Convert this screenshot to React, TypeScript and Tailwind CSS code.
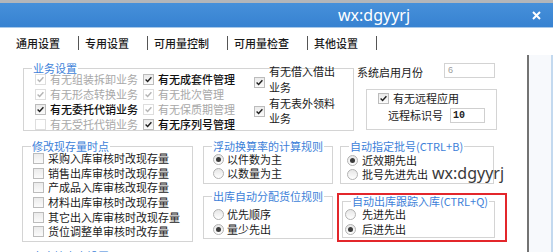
import React from "react";

const FONT = "font-['Microsoft_YaHei','Noto_Sans_CJK_SC',sans-serif]";

function Check({ checked = false, disabled = false }: { checked?: boolean; disabled?: boolean }) {
  return (
    <span
      className={
        disabled
          ? "shrink-0 w-[11px] h-[11px] border border-[#dedede] bg-white flex items-center justify-center"
          : "shrink-0 w-[11px] h-[11px] border border-[#bcbcbc] bg-linear-to-b from-[#ebebeb] to-[#fbfbfb] flex items-center justify-center"
      }
    >
      {checked && (
        <svg width="9" height="9" viewBox="0 0 9 9">
          <path
            d="M1.6 4.6 L3.6 6.5 L7.4 2.3"
            fill="none"
            stroke={disabled ? "#b4b4b4" : "#1e1e1e"}
            strokeWidth="1.4"
          />
        </svg>
      )}
    </span>
  );
}

function Radio({ checked = false }: { checked?: boolean }) {
  return (
    <span className="shrink-0 w-[11px] h-[11px] rounded-full border border-[#b2b2b2] bg-linear-to-b from-[#e6e6e6] to-white flex items-center justify-center">
      {checked && <span className="w-[5px] h-[5px] rounded-full bg-[#3c3c3c]" />}
    </span>
  );
}

function Group({
  legend,
  className,
  children,
}: {
  legend?: string;
  className: string;
  children?: React.ReactNode;
}) {
  return (
    <div className={"relative shrink-0 border border-[#d4d4d4] " + className}>
      {legend && (
        <span className="absolute -top-[7px] left-[8px] px-[1px] bg-white text-[#3d7fd9] leading-[12px] whitespace-nowrap">
          {legend}
        </span>
      )}
      {children}
    </div>
  );
}

function CRow({ label, checked, disabled, bold }: { label: string; checked?: boolean; disabled?: boolean; bold?: boolean }) {
  return (
    <div className="flex items-center h-[15px] gap-[4px]">
      <Check checked={checked} disabled={disabled} />
      <span className={disabled ? "text-[#a8a8a8] whitespace-nowrap leading-[13px]" : bold ? "text-[#111] font-medium whitespace-nowrap leading-[13px]" : "text-[#1a1a1a] whitespace-nowrap leading-[13px]"}>
        {label}
      </span>
    </div>
  );
}

function RRow({ label, checked, gap }: { label: string; checked?: boolean; gap: string }) {
  return (
    <div className={"flex items-center h-[14px] " + gap}>
      <Radio checked={checked} />
      <span className="text-[#1a1a1a] whitespace-nowrap leading-[13px]">{label}</span>
    </div>
  );
}

function Tab({ label }: { label: string }) {
  return (
    <>
      <span className="ml-[6px] mr-[18px] text-[#1a1a1a] font-medium whitespace-nowrap">{label}</span>
      <span className="w-px h-[14px] bg-[#555]" />
    </>
  );
}

export default function App() {
  return (
    <div className={"w-[553px] h-[252px] overflow-hidden bg-white flex flex-col relative text-[11px] " + FONT}>
      {/* top strip */}
      <div className="h-[3px] bg-[#b3b6ba] shrink-0" />
      {/* title bar */}
      <div className="h-[24px] shrink-0 bg-linear-to-b from-[#4690da] to-[#3782d1] flex items-center">
        <span className="ml-[338px] text-white text-[16px] leading-none font-['Noto_Sans',sans-serif]">wx:dgyyrj</span>
        <svg className="ml-auto mr-[12px]" width="9" height="9" viewBox="0 0 9 9">
          <path d="M1 1 L8 8 M8 1 L1 8" stroke="white" strokeWidth="2" />
        </svg>
      </div>
      <div className="h-px shrink-0 bg-[#a8c9ea]" />
      {/* tabs */}
      <div className="h-[27px] shrink-0 flex items-center pt-[3px] pl-[10px]">
        <Tab label="通用设置" />
        <Tab label="专用设置" />
        <Tab label="可用量控制" />
        <Tab label="可用量检查" />
        <Tab label="其他设置" />
      </div>
      <div className="flex flex-1 min-h-0">
        <div className="w-[527px] shrink-0 flex flex-col">
          {/* Row A */}
          <div className="flex items-start mt-[8px]">
            <Group legend="业务设置" className="ml-[23px] mt-[5px] w-[331px] h-[63px]">
              <div className="flex">
                <div className="w-[119px] pl-[11px] pt-[3px] flex flex-col">
                  <CRow label="有无组装拆卸业务" checked disabled />
                  <CRow label="有无形态转换业务" checked disabled />
                  <CRow label="有无委托代销业务" checked bold />
                  <CRow label="有无受托代销业务" disabled />
                </div>
                <div className="w-[111px] pt-[3px] flex flex-col">
                  <CRow label="有无成套件管理" checked bold />
                  <CRow label="有无批次管理" checked disabled />
                  <CRow label="有无保质期管理" checked disabled />
                  <CRow label="有无序列号管理" checked bold />
                </div>
                <div className="-mt-[6px] flex flex-col">
                  <div className="flex items-start gap-[4px]">
                    <span className="mt-[14px]">
                      <Check checked />
                    </span>
                    <span className="leading-[16px] text-[#1a1a1a]">
                      有无借入借出
                      <br />
                      业务
                    </span>
                  </div>
                  <div className="flex items-start gap-[4px] mt-[1px]">
                    <span className="mt-[10px]">
                      <Check checked />
                    </span>
                    <span className="leading-[15px] text-[#1a1a1a]">
                      有无表外领料
                      <br />
                      业务
                    </span>
                  </div>
                </div>
              </div>
            </Group>
            <div className="ml-[3px] flex flex-col">
              <div className="flex items-start">
                <span className="mt-[2px] leading-[14px] text-[#1a1a1a] whitespace-nowrap">系统启用月份</span>
                <div className="ml-[21px] w-[51px] h-[15px] border border-[#d3d3d3] bg-white text-[9px] leading-[13px] pl-[3px] text-[#9c9c9c] font-['Liberation_Sans',sans-serif]">
                  6
                </div>
              </div>
              <Group className="ml-[9px] mt-[10px] w-[131px] h-[41px]">
                <div className="pl-[11px] pt-[1px] flex items-center h-[15px] gap-[4px]">
                  <Check checked />
                  <span className="text-[#1a1a1a] whitespace-nowrap">有无远程应用</span>
                </div>
                <div className="pl-[21px] mt-[3px] flex items-center h-[15px]">
                  <span className="w-[62px] text-[#1a1a1a] whitespace-nowrap">远程标识号</span>
                  <div className="w-[35px] h-[15px] border border-[#cfcfcf] bg-white text-[10px] leading-[13px] pl-[2px] font-bold text-[#222] font-['Liberation_Mono',monospace]">
                    10
                  </div>
                </div>
              </Group>
            </div>
          </div>
          {/* Row B */}
          <div className="flex items-start mt-[15px]">
            <Group legend="修改现存量时点" className="ml-[22px] w-[171px] h-[96px]">
              <div className="pl-[10px] pt-[4px] flex flex-col">
                {[
                  "采购入库审核时改现存量",
                  "销售出库审核时改现存量",
                  "产成品入库审核改现存量",
                  "材料出库审核时改现存量",
                  "其它出入库审核时改现存量",
                  "货位调整单审核时改存量",
                ].map((t) => (
                  <div key={t} className="flex items-center h-[14.7px] gap-[4px]">
                    <Check />
                    <span className="text-[#1a1a1a] whitespace-nowrap leading-[13px]">{t}</span>
                  </div>
                ))}
              </div>
            </Group>
            <div className="ml-[10px] flex flex-col">
              <Group legend="浮动换算率的计算规则" className="w-[130px] h-[38px]">
                <div className="pl-[9px] pt-[5px] flex flex-col">
                  <RRow label="以件数为主" checked gap="gap-[3px]" />
                  <RRow label="以数量为主" gap="gap-[3px]" />
                </div>
              </Group>
              <Group legend="出库自动分配货位规则" className="mt-[12px] w-[130px] h-[43px]">
                <div className="pl-[9px] pt-[10px] flex flex-col gap-[1px]">
                  <RRow label="优先顺序" gap="gap-[3px]" />
                  <RRow label="量少先出" checked gap="gap-[3px]" />
                </div>
              </Group>
            </div>
            <div className="ml-[4px] flex flex-col">
              <Group legend="自动指定批号(CTRL+B)" className="ml-[3px] w-[154px] h-[38px]">
                <div className="pl-[6px] pt-[6px] flex flex-col">
                  <RRow label="近效期先出" checked gap="gap-[4px]" />
                  <RRow label="批号先进先出" gap="gap-[4px]" />
                </div>
              </Group>
              <div className="mt-[9px] w-[170px] h-[49px] border-2 border-[#e3262b]">
                <Group legend="自动出库跟踪入库(CTRL+Q)" className="ml-[3px] mt-[6px] w-[153px] h-[37px]">
                  <div className="pl-[2px] pt-[5px] flex flex-col gap-[1px]">
                    <RRow label="先进先出" gap="gap-[6px]" />
                    <RRow label="后进先出" checked gap="gap-[6px]" />
                  </div>
                </Group>
              </div>
            </div>
          </div>
          {/* Row C (cut off) */}
          <div className="mt-[7px] pl-[32px] leading-[14px] text-[#3d7fd9] whitespace-nowrap">出库检查点设置</div>
        </div>
        <div className="w-[2px] shrink-0 bg-[#737373]" />
        <div className="flex-1 bg-[#f7f9fc] border-r-[2px] border-r-[#c3d9ef]" />
      </div>
      {/* watermark */}
      <span className="absolute left-[432px] top-[165px] text-[16px] leading-none text-[#3a3a3a] font-['Noto_Sans',sans-serif]">
        wx:dgyyrj
      </span>
    </div>
  );
}
